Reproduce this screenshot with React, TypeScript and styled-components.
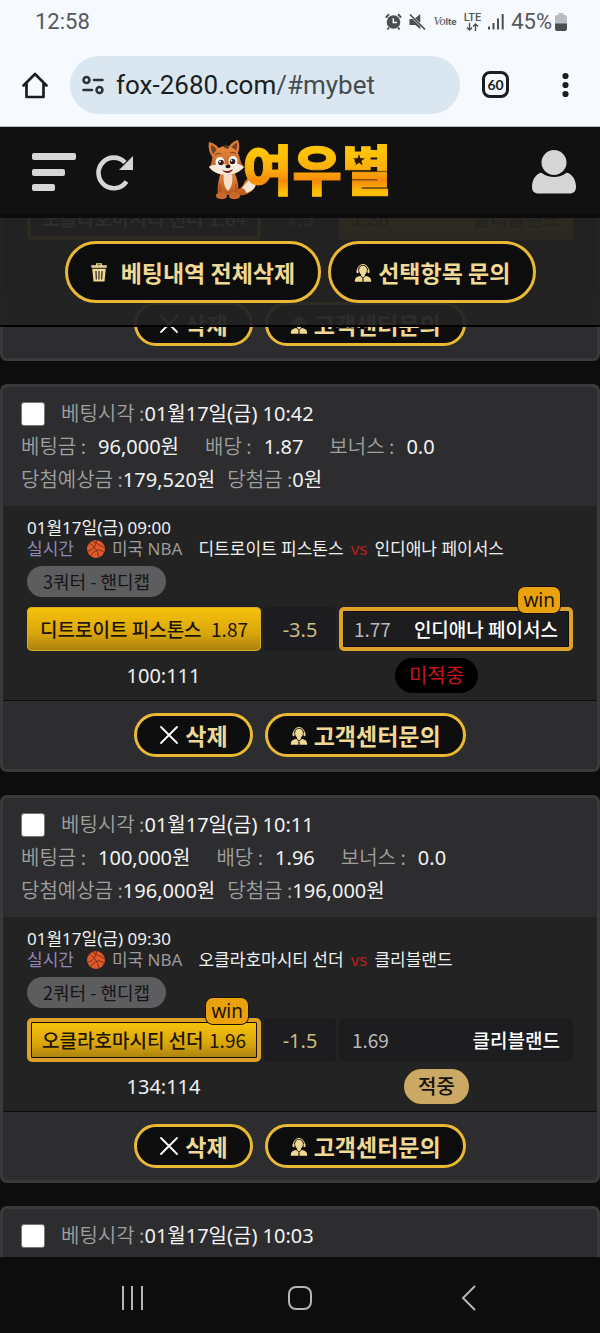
import React from "react";
import styled, { createGlobalStyle, css } from "styled-components";

const kr = `"Noto Sans", "Noto Sans CJK KR", sans-serif`;
const krDisplay = `"Noto Sans CJK KR", sans-serif`;

const GlobalStyle = createGlobalStyle`
  * { box-sizing: border-box; }
  body { margin: 0; background: #0d0d0d; font-family: ${kr}; }
  button { font: inherit; color: inherit; background: none; border: 0; padding: 0; cursor: pointer; }
  svg { display: block; flex: none; }
`;

const Shell = styled.div`
  display: flex;
  flex-direction: column;
  height: 100vh;
  overflow: hidden;
  color: #f0f0f0;
`;

/* ---------- phone status bar ---------- */

const StatusBar = styled.div`
  display: flex;
  align-items: center;
  height: 43px;
  flex: none;
  padding: 0 33px 0 35px;
  background: #f6f9fe;
  color: #55585b;
  font: 22px/24px Roboto, sans-serif;
`;

const StatusIcons = styled.div`
  display: flex;
  align-items: center;
  gap: 7px;
  margin-left: auto;
`;

const Volte = styled.span`
  font: italic 12px/16px "Liberation Serif", serif;
  b { font: bold 9px/16px Inter, sans-serif; }
`;

const Lte = styled.span`
  display: flex;
  flex-direction: column;
  align-items: center;
  font: 500 11px/11px Roboto, sans-serif;
`;

const Battery = styled.span`
  display: flex;
  align-items: center;
  gap: 3px;
`;

/* ---------- browser bar ---------- */

const BrowserBar = styled.div`
  display: flex;
  align-items: center;
  height: 84px;
  flex: none;
  padding: 0 31px 0 21px;
  background: #f6f9fe;
  border-bottom: 1px solid #b4bac2;
  color: #1a1d21;
`;

const Address = styled.button`
  display: flex;
  flex: 1;
  align-items: center;
  gap: 12px;
  height: 58px;
  min-width: 0;
  margin: 0 22px 0 21px;
  padding: 0 12px;
  border-radius: 29px;
  background: #dae7f0;
  font: 26px/32px Roboto, sans-serif;
  white-space: nowrap;
`;

const Path = styled.span`
  color: #454d53;
`;

const TabCount = styled.button`
  width: 27px;
  height: 27px;
  margin-right: 53px;
  border: 3px solid #1a1d21;
  border-radius: 8px;
  font: bold 14px/20px Lato, sans-serif;
`;

/* ---------- site header ---------- */

const SiteHeader = styled.header`
  position: relative;
  z-index: 2;
  display: grid;
  grid-template-columns: 1fr auto 1fr;
  align-items: center;
  height: 91px;
  flex: none;
  padding: 2px 24px 0 32px;
  background: #111111;
  border-bottom: 4px solid #0c0c0c;
`;

const HeaderSide = styled.div<{ $end?: boolean }>`
  display: flex;
  align-items: center;
  justify-content: ${(p) => (p.$end ? "flex-end" : "flex-start")};
  gap: 20px;
`;

const Logo = styled.a`
  display: flex;
  align-items: center;
  position: relative;
  padding-bottom: 4px;
  margin-right: 8px;
  text-decoration: none;
`;

const LogoText = styled.span`
  margin-left: -15px;
  padding-bottom: 4px;
  font: 900 54px/56px ${krDisplay};
  color: transparent;
  background: linear-gradient(#ffc408 20%, #fdb00c 48%, #f58a0a 68%, #ffc107 88%);
  background-clip: text;
  -webkit-background-clip: text;
  -webkit-text-stroke: 1px transparent;
`;

const LogoStar = styled.svg`
  position: absolute;
  right: 27px;
  top: 14px;
`;

/* ---------- feed ---------- */

const Feed = styled.main`
  position: relative;
  flex: 1;
  min-height: 0;
  overflow: hidden;
`;

const ActionBar = styled.div`
  position: absolute;
  z-index: 1;
  top: 0;
  left: 0;
  right: 0;
  display: flex;
  justify-content: center;
  gap: 7px;
  padding: 23px 0 22px 1px;
  background: rgba(35, 35, 35, 0.95);
  border-bottom: 2px solid #000;
`;

const CardList = styled.div`
  display: flex;
  flex-direction: column;
  gap: 23px;
  margin-top: -25px;
`;

const PillButton = styled.button<{ $large?: boolean; $spread?: boolean }>`
  display: flex;
  align-items: center;
  gap: ${(p) => (p.$spread ? 14 : 6)}px;
  height: ${(p) => (p.$large ? 62 : 44)}px;
  padding: 0 ${(p) => (p.$large ? 23 : 22)}px;
  border: 3px solid #e9b934;
  border-radius: 31px;
  background: #0d0d0d;
  color: #f0d995;
  font: bold 23px/32px ${krDisplay};
  white-space: nowrap;
`;

const Card = styled.article`
  border: 3px solid #3a3a3c;
  border-radius: 7px;
  background: #2d2d2f;
`;

const CardHead = styled.header`
  padding: 10px 18px;
  font-size: 20px;
  line-height: 32px;
`;

const Line = styled.div<{ $gap: number }>`
  display: flex;
  align-items: center;
  gap: ${(p) => p.$gap}px;
  height: 33px;
  white-space: nowrap;
`;

const Check = styled.input`
  appearance: none;
  width: 24px;
  height: 24px;
  margin: 0 16px 0 0;
  border: 1px solid #777;
  border-radius: 3px;
  background: #fff;
  &:checked { background: #e9b934; }
`;

const Label = styled.span`
  color: #a0a0a0;
  font-family: ${krDisplay};
  font-weight: 350;
`;

const Value = styled.span<{ $gap?: boolean }>`
  color: #f2f2f2;
  margin-left: ${(p) => (p.$gap ? 12 : 0)}px;
`;

const CardBody = styled.section<{ $bare?: boolean }>`
  padding: ${(p) => (p.$bare ? 0 : 12)}px 24px 7px;
  background: #232323;
`;

const GameDate = styled.div`
  height: 20px;
  font-size: 17px;
  line-height: 20px;
`;

const GameLine = styled.div`
  display: flex;
  align-items: center;
  height: 21px;
  font-size: 17px;
  line-height: 20px;
  white-space: nowrap;
`;

const Live = styled.span`
  margin-right: 13px;
  color: #8f88b8;
`;

const League = styled.span`
  margin: 0 16px 0 7px;
  color: #9a9a9a;
`;

const Versus = styled.span`
  margin: 0 7px;
  color: #b3201d;
`;

const Chip = styled.span`
  display: table;
  margin: 7px 0 10px;
  padding: 0 16px;
  border-radius: 16px;
  background: #5d5d5f;
  color: #151515;
  font: 18px/31px ${krDisplay};
`;

const OddsRow = styled.div`
  display: grid;
  grid-template-columns: 1fr 72px 1fr;
  gap: 3px;
  height: 44px;
`;

const Odd = styled.button<{ $picked?: boolean; $won?: boolean }>`
  position: relative;
  display: flex;
  align-items: center;
  justify-content: space-between;
  min-width: 0;
  padding: 0 13px;
  border-radius: 5px;
  background: #1d1d1f;
  color: #ffffff;
  font: 500 19px/28px ${krDisplay};
  white-space: nowrap;
  ${(p) => p.$picked && css`
    background: linear-gradient(#f8c30c, #d9a60b 60%, #a9800f);
    box-shadow: inset 0 0 0 1px #d8ab2c;
    color: #1c1402;
  `}
  ${(p) => p.$won && css`
    padding: 0 11px;
    border: 4px solid #dfa228;
    background-clip: padding-box;
    box-shadow: inset 0 0 0 1px #140d02;
  `}
`;

const Price = styled.span<{ $plain?: boolean }>`
  color: ${(p) => (p.$plain ? "#b9b9bb" : "inherit")};
  font-size: 19px;
  font-weight: 400;
`;

const Handicap = styled.span`
  display: grid;
  place-items: center;
  border-radius: 5px;
  background: #1d1d1f;
  color: #cdb983;
  font-size: 20px;
`;

const WinBadge = styled.span`
  position: absolute;
  right: 8px;
  top: -25px;
  padding: 0 5px;
  border: 1px solid #1a1200;
  border-radius: 8px;
  background: #e9a20c;
  color: #1c1402;
  font: 19px/26px ${kr};
`;

const ResultRow = styled.div`
  display: grid;
  grid-template-columns: 1fr 1fr;
  place-items: center;
  height: 35px;
  margin-top: 7px;
  font-size: 20px;
`;

const Verdict = styled.span<{ $hit?: boolean }>`
  padding: 0 14px;
  border-radius: 18px;
  background: ${(p) => (p.$hit ? "#cba863" : "#000")};
  color: ${(p) => (p.$hit ? "#111" : "#c5171a")};
  font-weight: ${(p) => (p.$hit ? 500 : 400)};
  line-height: 35px;
`;

const CardFoot = styled.footer`
  display: flex;
  justify-content: center;
  gap: 12px;
  padding: 12px 0;
  border-top: 1px solid #0c0c0c;
`;

/* ---------- system navigation ---------- */

const SystemNav = styled.nav`
  display: flex;
  align-items: center;
  justify-content: space-between;
  height: 76px;
  flex: none;
  padding: 6px 118px 0;
  background: #0d0d0d;
`;

/* ---------- drawings ---------- */

const AlarmIcon = () => (
  <svg width="17" height="18" viewBox="0 0 17 18" fill="#4c4f52">
    <circle cx="8.5" cy="9" r="6.8" />
    <path d="M.8 4.6 4 1.3M16.2 4.6 13 1.3M4 14.5l-1.6 2M13 14.5l1.6 2" stroke="#4c4f52" strokeWidth="2" />
    <path d="M8.3 5.2v4.3h3.6" fill="none" stroke="#f6f9fe" strokeWidth="1.5" />
  </svg>
);

const MuteIcon = () => (
  <svg width="17" height="18" viewBox="0 0 17 18" fill="#4c4f52">
    <path d="M.5 6h3.2l7.6 7.6v2.6L6.600 12H.5zM6.200 5.200 11.300 1v8.800z" />
    <path d="m1 1.500 15 15" stroke="#4c4f52" strokeWidth="1.700" />
  </svg>
);

const SignalIcon = () => (
  <svg width="16" height="17" viewBox="0 0 16 17" fill="#4c4f52">
    <path d="M0 13.500h2v3H0zM4.500 10h2v6.500h-2zM9 5.500h2v11H9zM13.700 1h2v15.500h-2z" />
  </svg>
);

const BatteryIcon = () => (
  <svg width="12" height="18" viewBox="0 0 12 18">
    <path d="M3.500 0h5v2H10a2 2 0 0 1 2 2v7H0V4a2 2 0 0 1 2-2h1.500z" fill="#b9bcc0" />
    <path d="M0 10.500h12V16a2 2 0 0 1-2 2H2a2 2 0 0 1-2-2z" fill="#4c4f52" />
  </svg>
);

const HomeIcon = () => (
  <svg width="28" height="28" viewBox="0 0 28 28" fill="none" stroke="currentColor" strokeWidth="2.700" strokeLinejoin="round" strokeLinecap="round">
    <path d="M2.500 14.500 14 3l11.500 11.500M5.500 12.500V26h17V12.500" />
  </svg>
);

const SiteInfoIcon = () => (
  <svg width="22" height="20" viewBox="0 0 22 20" fill="none" stroke="#2b3338" strokeWidth="2.500" strokeLinecap="round">
    <circle cx="4.500" cy="5" r="3" /><path d="M12 5h8.500M1.500 15h8.500" /><circle cx="17.500" cy="15" r="3" />
  </svg>
);

const DotsIcon = () => (
  <svg width="7" height="26" viewBox="0 0 7 26" fill="currentColor">
    <circle cx="3.500" cy="4" r="3.100" /><circle cx="3.500" cy="13" r="3.100" /><circle cx="3.500" cy="22" r="3.100" />
  </svg>
);

const MenuIcon = () => (
  <svg width="44" height="40" viewBox="0 0 44 40" fill="#d6d6d6">
    <rect width="44" height="7" y="1" rx="2" /><rect width="33" height="7" y="17" rx="2" /><rect width="23" height="7" y="32" rx="2" />
  </svg>
);

const ReloadIcon = () => (
  <svg width="38" height="38" viewBox="0 0 38 38">
    <path d="M30.500 28.500A15.300 15.300 0 1 1 29 9.500" fill="none" stroke="#d6d6d6" strokeWidth="4.600" />
    <path d="M37 3v14H23z" fill="#d6d6d6" />
  </svg>
);

const UserIcon = () => (
  <svg width="44" height="44" viewBox="0 0 44 44" fill="#d6d6d6">
    <circle cx="22" cy="12.500" r="12.500" />
    <path d="M9.500 22.700c7.500 5.800 17.500 5.800 25 0C40.500 23.500 44 30.500 44 36.500c0 5-2.500 7-6.500 7h-31c-4 0-6.500-2-6.500-7C0 30.500 3.500 23.500 9.500 22.700z" />
  </svg>
);

const FoxMascot = () => (
  <svg width="49" height="60" viewBox="0 0 49 60">
    <defs>
      <linearGradient id="fur" x1="0" y1="0" x2="0" y2="1">
        <stop offset="0" stopColor="#e98a3e" /><stop offset="1" stopColor="#b8561d" />
      </linearGradient>
    </defs>
    <path d="M29 55c6 2 15-2 18-8 2-4 1-9-2-11-4 2-7 3-9 7-2 5-5 6-8 7z" fill="url(#fur)" />
    <path d="M45 36c3 3 4 7 2 11-2 3-5 5-9 6 0-3-2-4-4-5 4-5 7-8 11-12z" fill="#f4e8da" />
    <path d="M13 32c-3 8-4 17-3 23h20c1-7 0-16-4-23z" fill="url(#fur)" />
    <path d="M16 34c-1 7 0 13 4 17 4-4 5-10 4-17z" fill="#f3dfc9" />
    <path d="M12 44v12M28 44v12" stroke="#a94d19" strokeWidth="1.200" />
    <path d="M8 56c0-3 3-4 6-4s5 2 5 5c-1 3-11 3-11-1zM21 57c0-3 2-5 5-5s6 1 6 4c0 4-10 4-11 1z" fill="#c9692b" />
    <path d="M5 18C1 13 0 7 1 2c5 1 9 4 11 8zM20 9c1-4 5-8 10-9 2 5 2 11-2 17z" fill="#d87831" />
    <path d="M5 14C3 11 3 8 3 5c3 1 5 3 6 6zM23 9c1-3 3-5 6-6 0 4 0 7-3 10z" fill="#71402b" />
    <path d="M16 6c8-1 15 5 16 13 1 4 2 5 4 8-4 5-11 8-18 8-8 0-14-4-17-8 3-3 2-6 4-11 2-6 6-9 11-10z" fill="url(#fur)" />
    <path d="M1 27c4-3 8-3 12 0 2-3 5-4 8-1 5-4 10-3 15 1-4 5-11 8-18 8-8 0-14-4-17-8z" fill="#f7eadb" />
    <path d="M15 7l3-3 1 3 3-2-2 4z" fill="#5b3019" />
    <ellipse cx="12" cy="22" rx="4.500" ry="5" fill="#fff" /><ellipse cx="25" cy="21" rx="4.500" ry="5" fill="#fff" />
    <circle cx="13" cy="22.500" r="2.800" fill="#301a10" /><circle cx="24.500" cy="21.500" r="2.800" fill="#301a10" />
    <circle cx="12" cy="21.500" r=".9" fill="#fff" /><circle cx="23.500" cy="20.500" r=".9" fill="#fff" />
    <path d="M7 15c2-2 4-2 6-1M22 13c2-1 4-1 6 1" stroke="#7a3a16" fill="none" />
    <ellipse cx="20" cy="26.500" rx="2.600" ry="1.800" fill="#1b1210" />
    <path d="M14 30c4 2 8 1 11-1-1 4-7 6-11 1z" fill="#7e231b" />
  </svg>
);

const TrashIcon = () => (
  <svg width="16" height="19" viewBox="0 0 16 19" fill="currentColor">
    <path d="M5 2.200V.3h6v1.900h4.700v2.600H.3V2.200zM6.300 2.200h3.400v-.8H6.300z" fillRule="evenodd" />
    <path fillRule="evenodd" d="M1.200 5.800h13.600L13.500 18.500h-11zM4.400 8l.4 8.500h1L5.500 8zm3.100 0v8.500h1V8zm3 0-.3 8.500h1l.4-8.500z" />
  </svg>
);

const AgentIcon = () => (
  <svg width="18" height="19" viewBox="0 0 18 19" fill="currentColor">
    <path d="M3.500 7.500a5.500 6 0 0 1 11 0" fill="none" stroke="currentColor" strokeWidth="1" />
    <path d="M9 2.800c2.500 0 3.900 1.600 3.900 4.200 0 2-.9 3.700-2 4.600v1.400l-1.900 1.500-1.900-1.500v-1.400C6 10.700 5.100 9 5.100 7c0-2.600 1.400-4.200 3.900-4.200z" />
    <rect x="2.500" y="6.500" width="2" height="3.800" rx="1" /><rect x="13.500" y="6.500" width="2" height="3.800" rx="1" />
    <path d="M.8 18.800c0-3.600 1.300-5 5.400-5.800L9 15.500l2.800-2.500c4.100.8 5.400 2.200 5.400 5.800z" />
    <path d="M9 15.200l-.9.900.5.700-.4 2h1.600l-.4-2 .5-.7z" fill="#0d0d0d" />
  </svg>
);

const CrossIcon = () => (
  <svg width="20" height="20" viewBox="0 0 20 20" stroke="#fff" strokeWidth="1.800" strokeLinecap="round">
    <path d="m2 2 16 16M18 2 2 18" />
  </svg>
);

const Basketball = () => (
  <svg width="18" height="18" viewBox="0 0 18 18">
    <circle cx="9" cy="9" r="9" fill="#e0592a" />
    <path d="M2.500 3C7 6 11 11 12 17.300M9.500 0C9 6 6 10 0 11.500M5.500 1C10 4 15 6 18 8M17 12.500C13 8.500 8 9 3.500 16" fill="none" stroke="#6a2413" strokeWidth=".8" />
  </svg>
);

/* ---------- data ---------- */

type Side = { team: string; price: string; picked?: boolean; won?: boolean };
type Bet = {
  placed?: string;
  stake?: string;
  rate?: string;
  expected?: string;
  payout?: string;
  start?: string;
  market?: string;
  home?: Side;
  away?: Side;
  line?: string;
  score?: string;
  hit?: boolean;
};

const bets: Bet[] = [
  {
    home: { team: "오클라호마시티 선더", price: "1.64", won: true },
    away: { team: "클리블랜드", price: "1.86", picked: true },
    line: "7.5",
  },
  {
    placed: "01월17일(금) 10:42", stake: "96,000원", rate: "1.87", expected: "179,520원", payout: "0원",
    start: "01월17일(금) 09:00", market: "3쿼터 - 핸디캡",
    home: { team: "디트로이트 피스톤스", price: "1.87", picked: true },
    away: { team: "인디애나 페이서스", price: "1.77", won: true },
    line: "-3.5", score: "100:111",
  },
  {
    placed: "01월17일(금) 10:11", stake: "100,000원", rate: "1.96", expected: "196,000원", payout: "196,000원",
    start: "01월17일(금) 09:30", market: "2쿼터 - 핸디캡",
    home: { team: "오클라호마시티 선더", price: "1.96", picked: true, won: true },
    away: { team: "클리블랜드", price: "1.69" },
    line: "-1.5", score: "134:114", hit: true,
  },
  { placed: "01월17일(금) 10:03" },
];

const BetCard = ({ bet, index }: { bet: Bet; index: number }) => {
  const { home, away } = bet;
  return (
    <Card>
      {bet.placed && (
        <CardHead>
          <Line $gap={0}>
            <Check type="checkbox" id={`bet-${index}`} />
            <label htmlFor={`bet-${index}`}>
              <Label>베팅시각 :</Label><Value>{bet.placed}</Value>
            </label>
          </Line>
          {bet.stake && (
            <>
              <Line $gap={26}>
                <span><Label>베팅금 :</Label><Value $gap>{bet.stake}</Value></span>
                <span><Label>배당 :</Label><Value $gap>{bet.rate}</Value></span>
                <span><Label>보너스 :</Label><Value $gap>0.0</Value></span>
              </Line>
              <Line $gap={12}>
                <span><Label>당첨예상금 :</Label><Value>{bet.expected}</Value></span>
                <span><Label>당첨금 :</Label><Value>{bet.payout}</Value></span>
              </Line>
            </>
          )}
        </CardHead>
      )}
      {home && away && (
        <>
          <CardBody $bare={!bet.placed}>
            {bet.start && (
              <>
                <GameDate>{bet.start}</GameDate>
                <GameLine>
                  <Live>실시간</Live>
                  <Basketball />
                  <League>미국 NBA</League>
                  <span>{home.team}</span>
                  <Versus>vs</Versus>
                  <span>{away.team}</span>
                </GameLine>
                <Chip>{bet.market}</Chip>
              </>
            )}
            <OddsRow>
              <Odd $picked={home.picked} $won={home.won}>
                <span>{home.team}</span>
                <Price>{home.price}</Price>
                {home.won && bet.placed && <WinBadge>win</WinBadge>}
              </Odd>
              <Handicap>{bet.line}</Handicap>
              <Odd $picked={away.picked} $won={away.won}>
                <Price $plain={!away.picked}>{away.price}</Price>
                <span>{away.team}</span>
                {away.won && <WinBadge>win</WinBadge>}
              </Odd>
            </OddsRow>
            <ResultRow>
              {bet.score && (
                <>
                  <span>{bet.score}</span>
                  <Verdict $hit={bet.hit}>{bet.hit ? "적중" : "미적중"}</Verdict>
                </>
              )}
            </ResultRow>
          </CardBody>
          <CardFoot>
            <PillButton><CrossIcon />삭제</PillButton>
            <PillButton><AgentIcon />고객센터문의</PillButton>
          </CardFoot>
        </>
      )}
    </Card>
  );
};

export default function App() {
  return (
    <Shell>
      <GlobalStyle />
      <StatusBar>
        <span>12:58</span>
        <StatusIcons>
          <AlarmIcon />
          <MuteIcon />
          <Volte>Vo<b>lte</b></Volte>
          <Lte>
            LTE
            <svg width="13" height="8" viewBox="0 0 13 8" fill="none" stroke="#4c4f52" strokeWidth="1.400">
              <path d="M3.500 0v7M1 4.500 3.500 7 6 4.500M9.500 8V1M7 3.500 9.500 1 12 3.500" />
            </svg>
          </Lte>
          <SignalIcon />
          <Battery>45%<BatteryIcon /></Battery>
        </StatusIcons>
      </StatusBar>
      <BrowserBar>
        <button aria-label="Home"><HomeIcon /></button>
        <Address>
          <SiteInfoIcon />
          <span>fox-2680.com<Path>/#mybet</Path></span>
        </Address>
        <TabCount>60</TabCount>
        <button aria-label="More"><DotsIcon /></button>
      </BrowserBar>
      <SiteHeader>
        <HeaderSide>
          <button aria-label="Menu"><MenuIcon /></button>
          <button aria-label="Reload"><ReloadIcon /></button>
        </HeaderSide>
        <Logo href="#">
          <FoxMascot />
          <LogoText>여우별</LogoText>
          <LogoStar width="12" height="12" viewBox="0 0 12 12" fill="#2a1a04">
            <path d="M6 0l1.500 4.200H12L8.400 6.900l1.300 4.500L6 8.700l-3.700 2.700 1.300-4.500L0 4.200h4.500z" />
          </LogoStar>
        </Logo>
        <HeaderSide $end>
          <button aria-label="Account"><UserIcon /></button>
        </HeaderSide>
      </SiteHeader>
      <Feed>
        <ActionBar>
          <PillButton $large $spread><TrashIcon />베팅내역 전체삭제</PillButton>
          <PillButton $large><AgentIcon />선택항목 문의</PillButton>
        </ActionBar>
        <CardList>
          {bets.map((bet, i) => <BetCard key={i} bet={bet} index={i} />)}
        </CardList>
      </Feed>
      <SystemNav>
        <button aria-label="Recent apps">
          <svg width="26" height="26" viewBox="0 0 26 26" stroke="#b5b5b5" strokeWidth="2"><path d="M5 1v24M14 1v24M24 1v24" /></svg>
        </button>
        <button aria-label="Home screen">
          <svg width="26" height="26" viewBox="0 0 26 26" fill="none" stroke="#b5b5b5" strokeWidth="2"><rect x="2" y="2" width="22" height="22" rx="7" /></svg>
        </button>
        <button aria-label="Back">
          <svg width="26" height="26" viewBox="0 0 26 26" fill="none" stroke="#b5b5b5" strokeWidth="2"><path d="M19 1 7 13l12 12" /></svg>
        </button>
      </SystemNav>
    </Shell>
  );
}
